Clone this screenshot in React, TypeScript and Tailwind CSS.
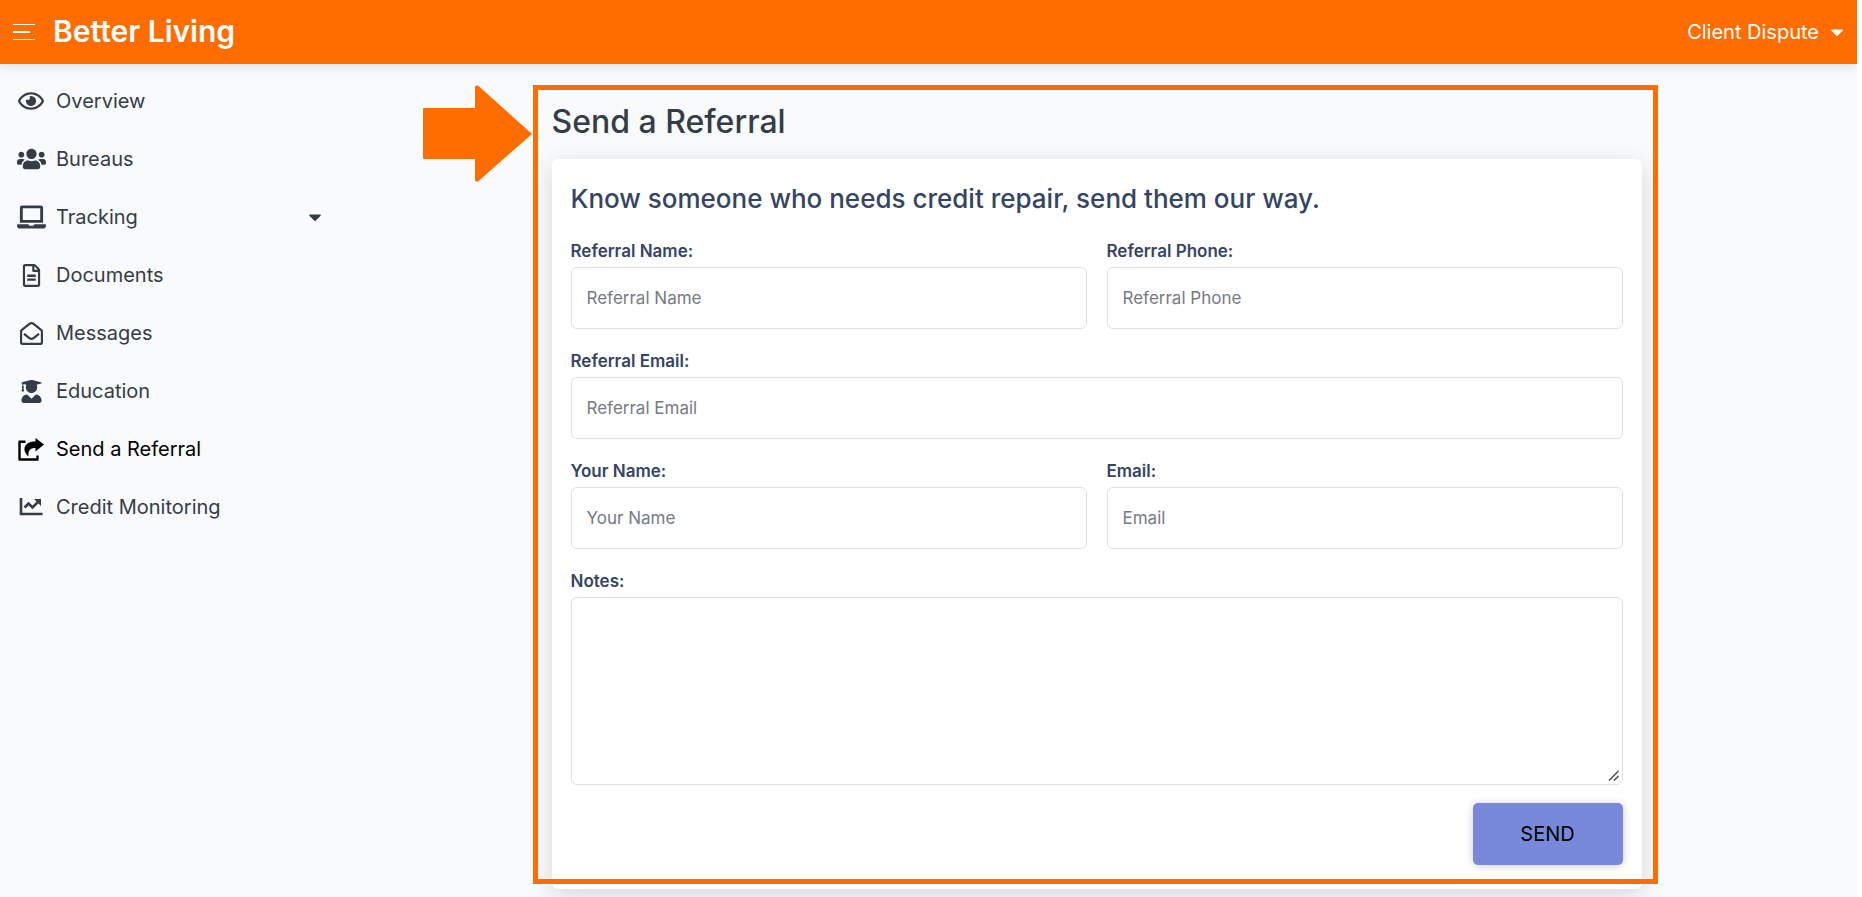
import type { ComponentType, ReactNode } from "react";
import {
  FaRegEye,
  FaLaptop,
  FaRegFileAlt,
  FaRegEnvelopeOpen,
  FaUserGraduate,
  FaUsers,
  FaCaretDown,
} from "react-icons/fa";

type IconProps = { className?: string };

function ShareIcon({ className }: IconProps) {
  return (
    <svg viewBox="0 0 26 23" className={className} fill="none" aria-hidden="true">
      <path d="M7.500 3.700H1.500v17.800h18v-4" stroke="currentColor" strokeWidth="2.400" strokeLinejoin="round" />
      <path
        d="M17.500 0l8.500 6.500-8.500 7V10C12 10 10 12.500 10.500 18.500 3 11.500 6.500 3.500 17.500 3.500z"
        fill="currentColor"
      />
    </svg>
  );
}

function ChartIcon({ className }: IconProps) {
  return (
    <svg viewBox="0 0 24 18" className={className} fill="none" aria-hidden="true">
      <path d="M2 0v16h21.500" stroke="currentColor" strokeWidth="2.600" />
      <path d="M5.500 9.500l4-4 4 4 5.500-5.500" stroke="currentColor" strokeWidth="2.600" />
      <path d="M15 1H22V8z" fill="currentColor" />
    </svg>
  );
}

const items: { label: string; icon: ComponentType<IconProps>; size: string; active?: boolean; menu?: boolean }[] = [
  { label: "Overview", icon: FaRegEye, size: "h-6 w-[26px]" },
  { label: "Bureaus", icon: FaUsers, size: "h-6 w-[29px]" },
  { label: "Tracking", icon: FaLaptop, size: "h-6 w-[29px]", menu: true },
  { label: "Documents", icon: FaRegFileAlt, size: "h-[23px] w-[23px]" },
  { label: "Messages", icon: FaRegEnvelopeOpen, size: "h-[23px] w-[23px]" },
  { label: "Education", icon: FaUserGraduate, size: "h-[23px] w-[23px]" },
  { label: "Send a Referral", icon: ShareIcon, size: "h-[23px] w-[26px]", active: true },
  { label: "Credit Monitoring", icon: ChartIcon, size: "h-[18px] w-6" },
];

function Field({ id, label, type = "text", wide }: { id: string; label: string; type?: string; wide?: boolean }) {
  return (
    <div className={wide ? "col-span-2" : ""}>
      <label htmlFor={id} className="block text-[17px] leading-8 font-semibold">
        {label}:
      </label>
      <input
        id={id}
        type={type}
        placeholder={label}
        className="block h-[62px] w-full rounded-md border border-[#e0e0e0] bg-white px-[15px] text-[17px] placeholder:text-[#757b82]"
      />
    </div>
  );
}

function Callout({ children }: { children: ReactNode }) {
  return (
    <div className="relative">
      {children}
      <div className="pointer-events-none absolute -top-[17px] -right-4 bottom-[5px] -left-[19px] border-[5px] border-[#ff6c00]" />
      <svg
        viewBox="0 0 110 98"
        className="absolute -top-[17px] -left-[129px] h-[98px] w-[110px] text-[#ff6c00]"
        aria-hidden="true"
      >
        <path
          d="M1 23H52V2q0-2 3-1.500L109 49 55 96.500q-3 .5-3-1.500V74H1q-1 0-1-1V24q0-1 1-1z"
          fill="currentColor"
        />
      </svg>
    </div>
  );
}

export default function App() {
  return (
    <div className="min-h-screen overflow-hidden border-r-[5px] border-white bg-[#f8fafc] font-['Inter',sans-serif] text-[#343d47]">
      <header className="relative flex h-16 items-center bg-[#ff6c00] pr-[10px] pl-[13px] text-white shadow-[0_2px_12px_rgba(0,0,0,0.12)]">
        <button type="button" aria-label="Toggle menu" className="flex w-[23px] flex-col gap-[6px]">
          <span className="h-px w-[22px] bg-white" />
          <span className="h-[2px] w-[17px] bg-white" />
          <span className="h-px w-[22px] bg-white" />
        </button>
        <a href="#home" className="ml-[17px] pb-[2px] text-[30px] leading-8 font-semibold">
          Better Living
        </a>
        <button type="button" className="ml-auto flex items-center gap-2 text-[20px]">
          Client Dispute
          <FaCaretDown className="size-5" />
        </button>
      </header>

      <div className="flex items-start">
        <nav className="w-[336px] shrink-0 pt-2">
          <ul>
            {items.map(({ label, icon: Icon, size, active, menu }) => (
              <li key={label}>
                <a
                  href={"#" + label.toLowerCase().replaceAll(" ", "-")}
                  className={
                    active
                      ? "flex h-[58px] items-center px-[15px] text-[20px] text-black"
                      : "flex h-[58px] items-center px-[15px] text-[20px]"
                  }
                >
                  <span className="flex w-8 justify-center">
                    <Icon className={size} />
                  </span>
                  <span className="ml-[9px]">{label}</span>
                  {menu && <FaCaretDown className="-mr-1 ml-auto size-5" />}
                </a>
              </li>
            ))}
          </ul>
        </nav>

        <main className="mx-auto w-full max-w-[1090px] pt-[38px]">
          <Callout>
            <h1 className="text-[32px] leading-10 font-medium">Send a Referral</h1>
            <section className="mt-[17px] rounded-md bg-white px-[19px] py-6 text-[#344563] shadow-[0_6px_24px_rgba(0,0,0,0.14)]">
              <h2 className="text-[26px] leading-8 font-medium">
                Know someone who needs credit repair, send them our way.
              </h2>
              <form className="mt-5 grid grid-cols-2 gap-x-5 gap-y-4">
                <Field id="ref-name" label="Referral Name" />
                <Field id="ref-phone" label="Referral Phone" type="tel" />
                <Field id="ref-email" label="Referral Email" type="email" wide />
                <Field id="your-name" label="Your Name" />
                <Field id="email" label="Email" type="email" />
                <div className="relative col-span-2">
                  <label htmlFor="notes" className="block text-[17px] leading-8 font-semibold">
                    Notes:
                  </label>
                  <textarea
                    id="notes"
                    className="block h-[188px] w-full resize rounded-md border border-[#e0e0e0] bg-white p-4"
                  />
                  <svg
                    viewBox="0 0 16 16"
                    className="pointer-events-none absolute right-px bottom-px size-4 rounded-br-md bg-white"
                    stroke="#555"
                    strokeWidth="1.600"
                    aria-hidden="true"
                  >
                    <path d="M3 12.500L12.500 3M8 12.500L12.500 8" />
                  </svg>
                </div>
                <button
                  type="submit"
                  className="col-span-2 mt-[2px] h-[62px] w-[150px] justify-self-end rounded-[5px] bg-[#7789d8] text-[20px] text-black shadow-[0_1px_8px_rgba(0,0,0,0.2)]"
                >
                  SEND
                </button>
              </form>
            </section>
          </Callout>
        </main>
      </div>
    </div>
  );
}
